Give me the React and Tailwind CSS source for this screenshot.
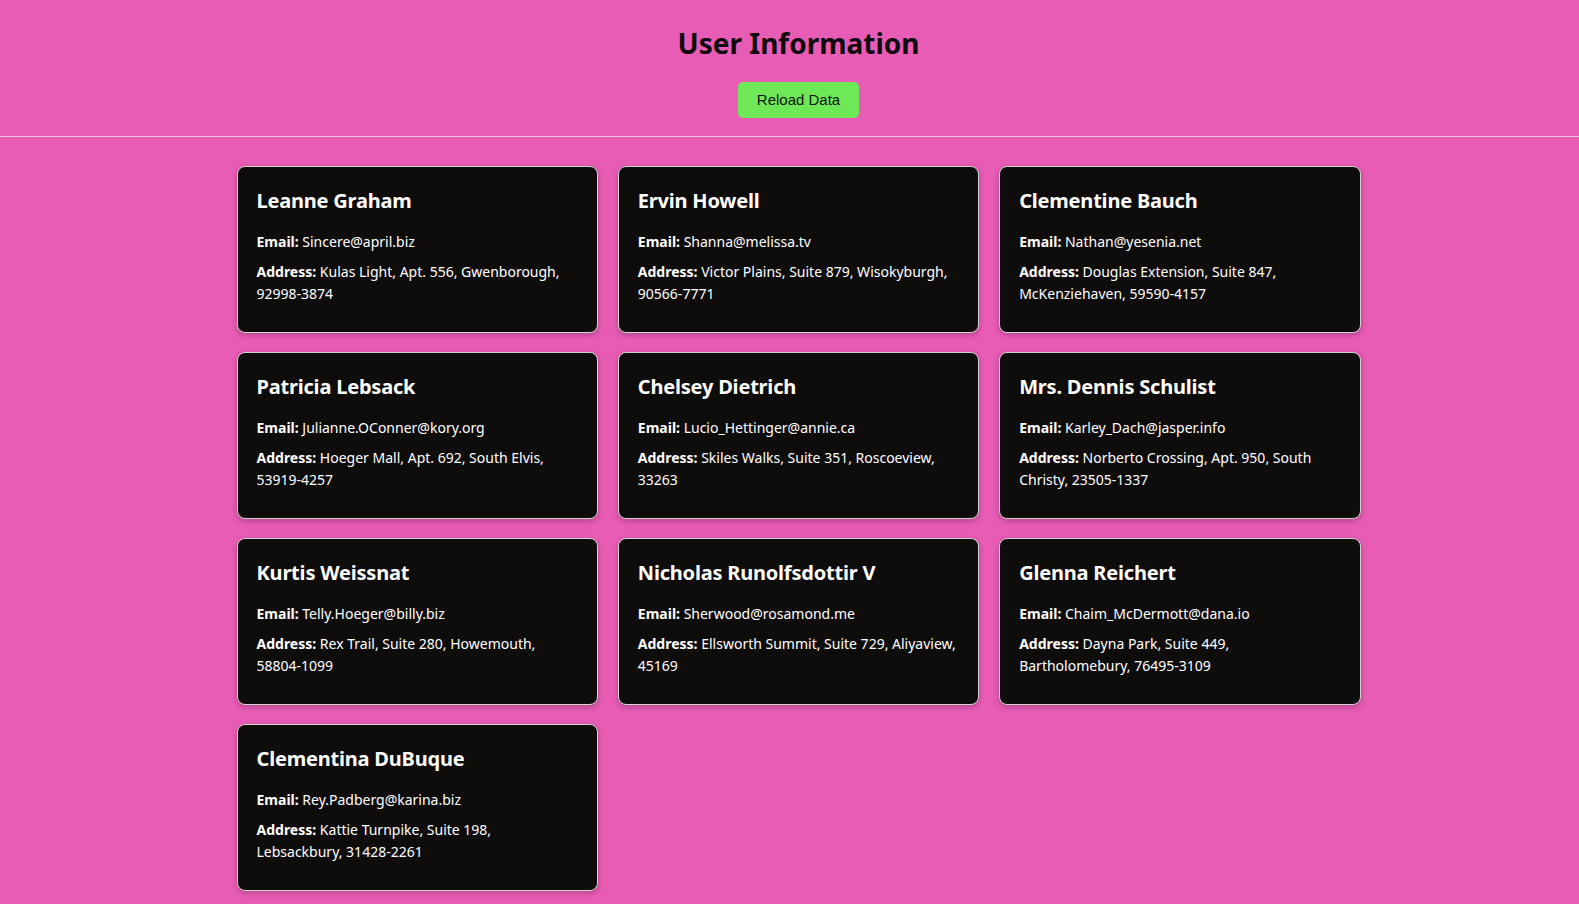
import { useState } from "react";

const USERS = [
  {
    id: 1,
    name: "Leanne Graham",
    email: "Sincere@april.biz",
    address: "Kulas Light, Apt. 556, Gwenborough, 92998-3874",
  },
  {
    id: 2,
    name: "Ervin Howell",
    email: "Shanna@melissa.tv",
    address: "Victor Plains, Suite 879, Wisokyburgh, 90566-7771",
  },
  {
    id: 3,
    name: "Clementine Bauch",
    email: "Nathan@yesenia.net",
    address: "Douglas Extension, Suite 847, McKenziehaven, 59590-4157",
  },
  {
    id: 4,
    name: "Patricia Lebsack",
    email: "Julianne.OConner@kory.org",
    address: "Hoeger Mall, Apt. 692, South Elvis, 53919-4257",
  },
  {
    id: 5,
    name: "Chelsey Dietrich",
    email: "Lucio_Hettinger@annie.ca",
    address: "Skiles Walks, Suite 351, Roscoeview, 33263",
  },
  {
    id: 6,
    name: "Mrs. Dennis Schulist",
    email: "Karley_Dach@jasper.info",
    address: "Norberto Crossing, Apt. 950, South Christy, 23505-1337",
  },
  {
    id: 7,
    name: "Kurtis Weissnat",
    email: "Telly.Hoeger@billy.biz",
    address: "Rex Trail, Suite 280, Howemouth, 58804-1099",
  },
  {
    id: 8,
    name: "Nicholas Runolfsdottir V",
    email: "Sherwood@rosamond.me",
    address: "Ellsworth Summit, Suite 729, Aliyaview, 45169",
  },
  {
    id: 9,
    name: "Glenna Reichert",
    email: "Chaim_McDermott@dana.io",
    address: "Dayna Park, Suite 449, Bartholomebury, 76495-3109",
  },
  {
    id: 10,
    name: "Clementina DuBuque",
    email: "Rey.Padberg@karina.biz",
    address: "Kattie Turnpike, Suite 198, Lebsackbury, 31428-2261",
  },
];

const UserCard = ({ user }) => {
  return (
    <div className="rounded-lg border border-[#d6d2d2] bg-[#0f0c0c] px-[19px] pt-5 pb-[27px] text-white shadow-[0_2px_6px_rgba(0,0,0,0.25)]">
      <h2 className="mb-4 text-[20px] font-bold leading-[28px] tracking-[-0.2px]">
        {user.name}
      </h2>
      <p className="mb-2 text-[14px] leading-[22px]">
        <strong className="font-bold">Email:</strong> {user.email}
      </p>
      <p className="text-[14px] leading-[22px]">
        <strong className="font-bold">Address:</strong> {user.address}
      </p>
    </div>
  );
};

const App = () => {
  const [users, setUsers] = useState(USERS);

  const reloadData = () => {
    setUsers([...USERS]);
  };

  return (
    <div className="min-h-screen bg-[#e95cb6] font-['Noto_Sans',sans-serif]">
      <header className="border-b border-[#f5bde0] pt-[25px] pb-[18px] pl-[18px] text-center">
        <h1 className="text-[28px] font-bold leading-[36px] text-[#0e0a0d]">
          User Information
        </h1>
        <button
          onClick={reloadData}
          className="mt-[21px] h-9 rounded-[5px] bg-[#6fe857] px-[19px] font-['Liberation_Sans',Arial,sans-serif] text-[15px] text-[#111]"
        >
          Reload Data
        </button>
      </header>

      <main className="flex justify-center pt-[29px] pb-5 pl-[18px]">
        <div className="grid w-[1124px] grid-cols-3 gap-x-5 gap-y-[19px]">
          {users.map((user) => (
            <UserCard key={user.id} user={user} />
          ))}
        </div>
      </main>
    </div>
  );
};

export default App;
